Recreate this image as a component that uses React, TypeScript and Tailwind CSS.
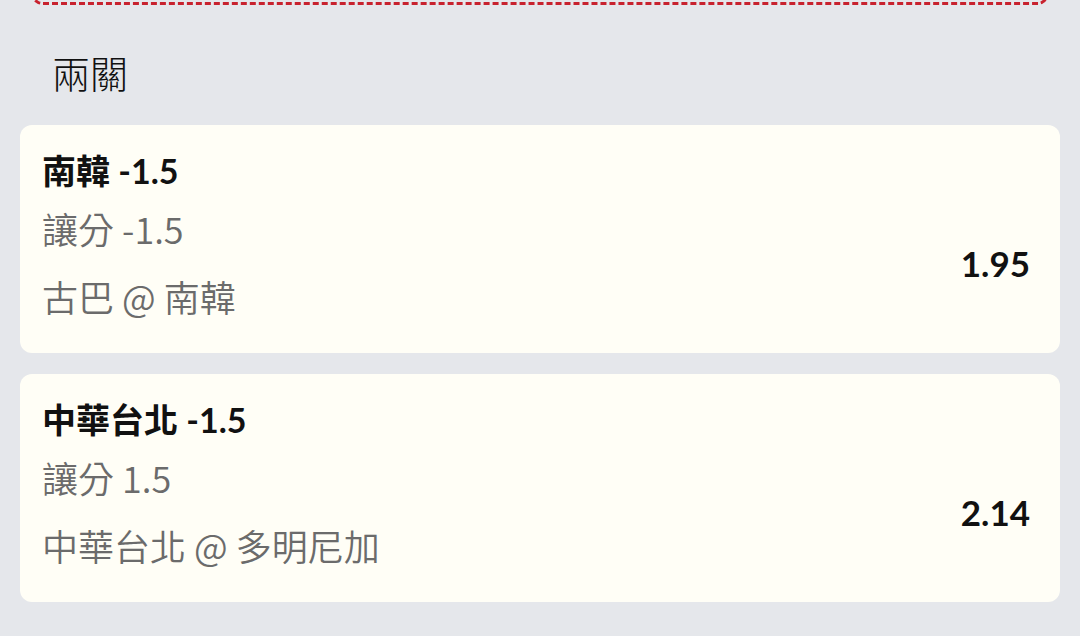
import React from "react";

const font = { fontFamily: 'Lato, "Noto Sans CJK TC", sans-serif' };
const grayFont = { fontFamily: '"Noto Sans CJK TC", sans-serif' };

function Card({ title, sub, match, odds }: { title: string; sub: string; match: string; odds: string }) {
  return (
    <div className="flex rounded-[12px] bg-[#fffef6] pl-[22px] pr-[30px] pt-[22px] pb-[33px]">
      <div className="flex flex-1 flex-col">
        <div className="h-[48px] text-[34px] font-bold leading-[48px] text-[#111111]">{title}</div>
        <div className="mt-[9px] h-[48px] text-[36px] font-[350] leading-[48px] text-[#6b6b6b]" style={grayFont}>{sub}</div>
        <div className="mt-[20px] h-[48px] text-[36px] font-[350] leading-[48px] text-[#6b6b6b]" style={grayFont}>{match}</div>
      </div>
      <div className="flex items-start">
        <div className="mt-[92px] h-[48px] text-[35px] font-bold leading-[48px] text-[#111111]">{odds}</div>
      </div>
    </div>
  );
}

export default function App() {
  return (
    <div className="h-[636px] w-[1080px] overflow-hidden bg-[#e5e7eb] px-[20px]" style={font}>
      <div className="mx-[12px] -mt-[20px] h-[25px] rounded-b-[10px] border-[3px] border-dashed border-[#c8222e] border-t-0"></div>
      <div className="ml-[32px] mt-[43px] h-[48px] text-[38px] font-light leading-[48px] text-[#111111]" style={{ fontFamily: '"Noto Sans CJK TC", sans-serif' }}>
        兩關
      </div>
      <div className="mt-[29px] flex flex-col gap-[21px]">
        <Card title="南韓 -1.5" sub="讓分 -1.5" match="古巴 @ 南韓" odds="1.95" />
        <Card title="中華台北 -1.5" sub="讓分 1.5" match="中華台北 @ 多明尼加" odds="2.14" />
      </div>
    </div>
  );
}
